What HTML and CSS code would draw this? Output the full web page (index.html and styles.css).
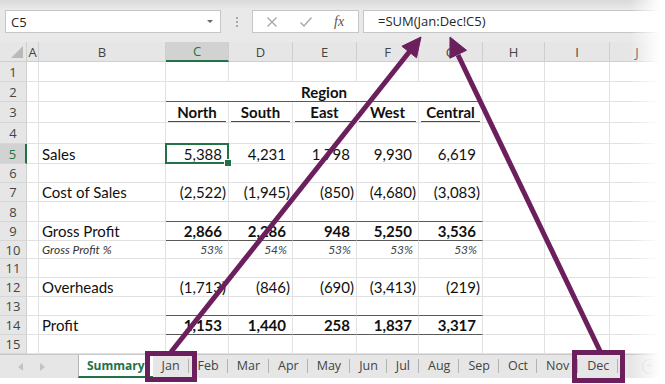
FILE: index.html
```html
<!DOCTYPE html>
<html>
<head>
<meta charset="utf-8">
<link rel="stylesheet" href="styles.css">
</head>
<body>
<div class="app">
  <div class="fbar">
    <div class="namebox"><span>C5</span><span class="dd"></span></div>
    <div class="grip"><i></i></div>
    <div class="btns">
      <svg class="ico" width="12" height="12" viewBox="0 0 12 12"><path d="M1.5 1.5 L10.5 10.5 M10.5 1.5 L1.5 10.5" stroke="#a6a6a6" stroke-width="1.3" fill="none"/></svg>
      <svg class="ico" width="14" height="12" viewBox="0 0 14 12"><path d="M1.5 6.5 L5 10 L12.5 1.5" stroke="#a6a6a6" stroke-width="1.3" fill="none"/></svg>
      <span class="fx">fx</span>
    </div>
    <div class="formula">=SUM(Jan:Dec!C5)</div>
  </div>

  <div class="sheet">
    <div class="corner"></div><div class="ch">A</div><div class="ch">B</div><div class="ch s">C</div><div class="ch">D</div><div class="ch">E</div><div class="ch">F</div><div class="ch">G</div><div class="ch">H</div><div class="ch">I</div><div class="ch">J</div>

    <div class="rh">1</div><div class="c"></div><div class="c"></div><div class="c"></div><div class="c"></div><div class="c"></div><div class="c"></div><div class="c"></div><div class="c"></div><div class="c"></div><div class="c"></div>

    <div class="rh">2</div><div class="c"></div><div class="c"></div><div class="c region k">Region</div><div class="c"></div><div class="c"></div><div class="c"></div>

    <div class="rh">3</div><div class="c"></div><div class="c"></div><div class="c hd"><span>North</span></div><div class="c hd"><span>South</span></div><div class="c hd"><span>East</span></div><div class="c hd"><span>West</span></div><div class="c hd"><span>Central</span></div><div class="c"></div><div class="c"></div><div class="c"></div>

    <div class="rh">4</div><div class="c"></div><div class="c"></div><div class="c"></div><div class="c"></div><div class="c"></div><div class="c"></div><div class="c"></div><div class="c"></div><div class="c"></div><div class="c"></div>

    <div class="rh s">5</div><div class="c"></div><div class="c l">Sales</div><div class="c n sel">5,388</div><div class="c n">4,231</div><div class="c n">1,798</div><div class="c n">9,930</div><div class="c n">6,619</div><div class="c"></div><div class="c"></div><div class="c"></div>

    <div class="rh">6</div><div class="c"></div><div class="c"></div><div class="c"></div><div class="c"></div><div class="c"></div><div class="c"></div><div class="c"></div><div class="c"></div><div class="c"></div><div class="c"></div>

    <div class="rh">7</div><div class="c"></div><div class="c l">Cost of Sales</div><div class="c n g">(2,522)</div><div class="c n g">(1,945)</div><div class="c n g">(850)</div><div class="c n g">(4,680)</div><div class="c n g">(3,083)</div><div class="c"></div><div class="c"></div><div class="c"></div>

    <div class="rh">8</div><div class="c"></div><div class="c"></div><div class="c k"></div><div class="c k"></div><div class="c k"></div><div class="c k"></div><div class="c k"></div><div class="c"></div><div class="c"></div><div class="c"></div>

    <div class="rh">9</div><div class="c"></div><div class="c l">Gross Profit</div><div class="c n b k">2,866</div><div class="c n b k">2,286</div><div class="c n b k">948</div><div class="c n b k">5,250</div><div class="c n b k">3,536</div><div class="c"></div><div class="c"></div><div class="c"></div>

    <div class="rh">10</div><div class="c"></div><div class="c l it">Gross Profit %</div><div class="c n p">53%</div><div class="c n p">54%</div><div class="c n p">53%</div><div class="c n p">53%</div><div class="c n p">53%</div><div class="c"></div><div class="c"></div><div class="c"></div>

    <div class="rh">11</div><div class="c"></div><div class="c"></div><div class="c"></div><div class="c"></div><div class="c"></div><div class="c"></div><div class="c"></div><div class="c"></div><div class="c"></div><div class="c"></div>

    <div class="rh">12</div><div class="c"></div><div class="c l">Overheads</div><div class="c n g">(1,713)</div><div class="c n g">(846)</div><div class="c n g">(690)</div><div class="c n g">(3,413)</div><div class="c n g">(219)</div><div class="c"></div><div class="c"></div><div class="c"></div>

    <div class="rh">13</div><div class="c"></div><div class="c"></div><div class="c k"></div><div class="c k"></div><div class="c k"></div><div class="c k"></div><div class="c k"></div><div class="c"></div><div class="c"></div><div class="c"></div>

    <div class="rh">14</div><div class="c"></div><div class="c l">Profit</div><div class="c n b k">1,153</div><div class="c n b k">1,440</div><div class="c n b k">258</div><div class="c n b k">1,837</div><div class="c n b k">3,317</div><div class="c"></div><div class="c"></div><div class="c"></div>

    <div class="rh">15</div><div class="c"></div><div class="c"></div><div class="c"></div><div class="c"></div><div class="c"></div><div class="c"></div><div class="c"></div><div class="c"></div><div class="c"></div><div class="c"></div>
  </div>

  <div class="tabs">
    <div class="nav"><span class="tri left"></span><span class="tri right"></span></div>
    <div class="tab active">Summary</div>
    <div class="tab">Jan</div>
    <div class="tab">Feb</div>
    <div class="tab">Mar</div>
    <div class="tab">Apr</div>
    <div class="tab">May</div>
    <div class="tab">Jun</div>
    <div class="tab">Jul</div>
    <div class="tab">Aug</div>
    <div class="tab">Sep</div>
    <div class="tab">Oct</div>
    <div class="tab">Nov</div>
    <div class="tab">Dec</div>
    <div class="plus">+</div>
  </div>

  <div class="fade"></div>

  <svg class="arrows" width="665" height="384" viewBox="0 0 665 384">
    <g stroke="#6b1f5c" fill="#6b1f5c">
      <line x1="171" y1="352" x2="410" y2="51" stroke-width="5"/>
      <polygon points="421,37 416.5,57.8 401.9,46.2" stroke-width="1"/>
      <line x1="600" y1="351" x2="458" y2="55" stroke-width="5"/>
      <polygon points="450,37 466.5,50.3 449.9,58.2" stroke-width="1"/>
      <rect x="147.5" y="353.5" width="47" height="26" fill="none" stroke-width="5"/>
      <rect x="574.5" y="352.5" width="48" height="28" fill="none" stroke-width="5"/>
    </g>
  </svg>
</div>
</body>
</html>
```

FILE: styles.css
```css
* { box-sizing: border-box; }
html, body { margin: 0; padding: 0; background: #fff; }
.app {
  position: relative;
  width: 665px;
  height: 384px;
  overflow: hidden;
  font-family: "Open Sans", "Noto Sans", sans-serif;
}

/* formula bar */
.fbar {
  height: 42px;
  display: flex;
  align-items: flex-start;
  padding-top: 10px;
  background: linear-gradient(#d9d9d9, #e9e9e9 9px, #e9e9e9);
}
.namebox {
  margin-left: 5px;
  width: 216px;
  height: 23px;
  background: #fff;
  border: 1px solid #c6c6c6;
  display: flex;
  align-items: center;
  justify-content: space-between;
  padding: 0 7px 0 5px;
  font-size: 13px;
  color: #262626;
}
.dd {
  width: 0; height: 0;
  border-left: 3px solid transparent;
  border-right: 3px solid transparent;
  border-top: 3px solid #666;
}
.grip {
  width: 31px;
  height: 23px;
  display: flex;
  align-items: center;
  justify-content: center;
}
.grip i {
  display: block;
  width: 2px; height: 2px;
  background: #a8a8a8;
  margin-top: -8px;
  box-shadow: 0 4px #a8a8a8, 0 8px #a8a8a8;
}
.btns {
  width: 107px;
  height: 23px;
  background: #fff;
  border: 1px solid #c6c6c6;
  display: flex;
  align-items: center;
  padding-left: 13px;
}
.btns .ico { display: block; }
.btns .ico + .ico { margin-left: 21px; }
.fx {
  margin-left: 21px;
  font-family: "Liberation Serif", serif;
  font-style: italic;
  font-size: 14px;
  color: #555;
}
.formula {
  margin-left: 4px;
  flex: 1;
  height: 23px;
  background: #fff;
  border: 1px solid #c6c6c6;
  border-right: none;
  padding-left: 14px;
  font-size: 13px;
  line-height: 21px;
  color: #262626;
}

/* grid */
.sheet {
  display: grid;
  grid-template-columns: 27px 12px 127px 63px 64px 64px 62px 64px 62px 65px 1fr;
  grid-template-rows: 20px 20px 20px 21px 21px 20px 19px 19px 20px 19px 18px 19px 19px 19px 19px 19px;
  background: #fff;
}
.corner {
  position: relative;
  background: #e6e6e6;
  border-right: 1px solid #cfcfcf;
  border-bottom: 1px solid #cfcfcf;
}
.corner::after {
  content: "";
  position: absolute;
  right: 3px;
  bottom: 3px;
  width: 0; height: 0;
  border-left: 12px solid transparent;
  border-bottom: 12px solid #b9b9b9;
}
.ch {
  background: #e6e6e6;
  border-right: 1px solid #cfcfcf;
  border-bottom: 1px solid #cfcfcf;
  font-size: 13px;
  color: #444;
  display: flex;
  align-items: center;
  justify-content: center;
}
.ch.s {
  background: #d2d2d2;
  color: #217346;
  border-bottom: 2px solid #217346;
}
.rh {
  background: #e6e6e6;
  border-right: 1px solid #cfcfcf;
  border-bottom: 1px solid #d6d6d6;
  font-size: 13px;
  color: #444;
  display: flex;
  align-items: center;
  justify-content: center;
}
.rh.s {
  background: #d2d2d2;
  color: #217346;
  border-right: 2px solid #217346;
}
.c {
  border-right: 1px solid #e1e1e1;
  border-bottom: 1px solid #e1e1e1;
  font-family: Lato, "Open Sans", sans-serif;
  font-size: 15px;
  line-height: 18px;
  color: #111;
  display: flex;
  align-items: flex-end;
  white-space: nowrap;
  min-width: 0;
}
.l { padding-left: 3px; }
.it { font-style: italic; font-size: 12px; color: #333; line-height: 17px; }
.n { justify-content: flex-end; padding-right: 6px; }
.n.g { padding-right: 2px; }
.b { font-weight: 700; }
.p { font-style: italic; font-size: 12px; color: #444; padding-right: 5px; line-height: 17px; }
.k { border-bottom-color: #595959; }
.region {
  grid-column: span 5;
  justify-content: center;
  font-weight: 700;
}
.hd { font-weight: 700; padding: 0 2px; }
.hd span {
  flex: 1;
  text-align: center;
  border-bottom: 1px solid #4a4a4a;
}
.sel { position: relative; }
.sel::after {
  content: "";
  position: absolute;
  left: -1px; top: -1px; right: -1px; bottom: -1px;
  border: 2px solid #217346;
}
.sel::before {
  content: "";
  position: absolute;
  right: -4px; bottom: -4px;
  width: 6px; height: 6px;
  background: #217346;
  border: 1px solid #fff;
  z-index: 2;
}

/* tabs */
.tabs {
  height: 24px;
  background: #e6e6e6;
  border-top: 1px solid #c8c8c8;
  display: flex;
  align-items: stretch;
  font-size: 12.5px;
  color: #444;
}
.nav {
  width: 78px;
  display: flex;
  align-items: center;
  padding-left: 18px;
}
.tri {
  width: 0; height: 0;
  border-top: 4px solid transparent;
  border-bottom: 4px solid transparent;
}
.tri.left { border-right: 5px solid #c2c2c2; }
.tri.right { border-left: 5px solid #c2c2c2; margin-left: 17px; }
.tab {
  position: relative;
  padding: 0 9px;
  line-height: 21px;
}
.tab::after {
  content: "";
  position: absolute;
  right: 0; top: 4px; bottom: 5px;
  width: 1px;
  background: #b3b3b3;
}
.tab.active {
  background: #fff;
  color: #217346;
  font-weight: 700;
  font-size: 12px;
  border-left: 1px solid #b3b3b3;
  border-bottom: 2px solid #217346;
  padding: 0 8px;
}
.tab.active::after { display: none; }
.plus {
  margin-left: 24px;
  margin-top: 4px;
  width: 15px;
  height: 15px;
  border: 1px solid #c6c6c6;
  border-radius: 50%;
  color: #c6c6c6;
  font-size: 14px;
  line-height: 12px;
  text-align: center;
}

/* overlays */
.fade {
  position: absolute;
  top: 0; bottom: 0;
  left: 630px; right: 0;
  background: linear-gradient(to right, rgba(255,255,255,0), #fff 85%);
  pointer-events: none;
}
.arrows {
  position: absolute;
  left: 0; top: 0;
  pointer-events: none;
}
```
